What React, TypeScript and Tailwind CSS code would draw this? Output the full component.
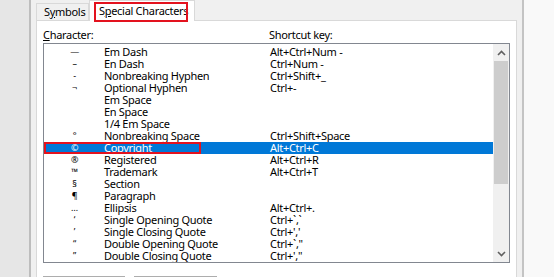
import { ReactNode } from 'react';

type Row = { sym: string; name: string; key: string };

const rows: Row[] = [
  { sym: '—', name: 'Em Dash', key: 'Alt+Ctrl+Num -' },
  { sym: '–', name: 'En Dash', key: 'Ctrl+Num -' },
  { sym: '-', name: 'Nonbreaking Hyphen', key: 'Ctrl+Shift+_' },
  { sym: '¬', name: 'Optional Hyphen', key: 'Ctrl+-' },
  { sym: '', name: 'Em Space', key: '' },
  { sym: '', name: 'En Space', key: '' },
  { sym: '', name: '1/4 Em Space', key: '' },
  { sym: '°', name: 'Nonbreaking Space', key: 'Ctrl+Shift+Space' },
  { sym: '©', name: 'Copyright', key: 'Alt+Ctrl+C' },
  { sym: '®', name: 'Registered', key: 'Alt+Ctrl+R' },
  { sym: '™', name: 'Trademark', key: 'Alt+Ctrl+T' },
  { sym: '§', name: 'Section', key: '' },
  { sym: '¶', name: 'Paragraph', key: '' },
  { sym: '…', name: 'Ellipsis', key: 'Alt+Ctrl+.' },
  { sym: '‘', name: 'Single Opening Quote', key: 'Ctrl+`,`' },
  { sym: '’', name: 'Single Closing Quote', key: "Ctrl+','" },
  { sym: '“', name: 'Double Opening Quote', key: 'Ctrl+`,"' },
  { sym: '”', name: 'Double Closing Quote', key: 'Ctrl+\',"' },
];

const SELECTED = 8;

function Chevron({ up }: { up?: boolean }) {
  return (
    <svg width="9" height="6" viewBox="0 0 9 6" className="text-[#606060]">
      <path
        d={up ? 'M1 5 L4.5 1.5 L8 5' : 'M1 1 L4.5 4.5 L8 1'}
        fill="none"
        stroke="currentColor"
        strokeWidth="1.6"
      />
    </svg>
  );
}

function ListRow({ row, selected }: { row: Row; selected: boolean }): ReactNode {
  return (
    <div
      className={`relative flex h-[12px] items-center leading-[12px] ${
        selected ? 'bg-[#0078d7] text-white' : 'text-black'
      }`}
    >
      <span className="w-[59px] text-center text-[9px]">{row.sym}</span>
      <span className="w-[166px] whitespace-nowrap">{row.name}</span>
      <span className="whitespace-nowrap">{row.key}</span>
      {selected && (
        <div className="absolute left-[-1px] top-[0px] h-[12px] w-[157px] border-2 border-[#e3121e]" />
      )}
    </div>
  );
}

export default function App() {
  return (
    <div
      className="flex h-[277px] w-[554px] overflow-hidden text-[11px] tracking-[-0.3px] text-black"
      style={{ fontFamily: '"Noto Sans", "Open Sans", sans-serif' }}
    >
      <div className="w-[29px] shrink-0 bg-[#e6e6e6]" />
      <div className="w-[2px] shrink-0 bg-[#bdbdbd]" />
      <div className="flex w-[493px] shrink-0 flex-col border-r-2 border-[#c4c4c4] bg-[#f0f0f0] pl-[5px]">
        {/* tabs */}
        <div className="flex h-[20px] items-end">
          <div className="flex h-[17px] w-[53px] items-center border border-b-0 border-[#d9d9d9] pl-[7px] leading-[14px]">
            S<span className="underline">y</span>mbols
          </div>
          <div className="relative z-10 -mb-px flex h-[21px] w-[106px] items-center border border-b-0 border-[#d9d9d9] bg-white pl-[9px] leading-[14px]">
            S<span className="underline">p</span>ecial Characters
            <div className="absolute bottom-[-1px] left-[4px] right-[6px] top-[1px] border-2 border-[#e3121e]" />
          </div>
        </div>
        {/* pane */}
        <div className="flex w-[481px] flex-1 flex-col border border-[#d9d9d9] bg-white px-[6px] pt-[7px]">
          <div className="flex h-[14px] leading-[14px]">
            <span className="w-[226px]">
              <span className="underline">C</span>haracter:
            </span>
            <span>Shortcut key:</span>
          </div>
          <div className="mt-[1px] flex h-[220px] w-[467px] border border-[#828790]">
            <div className="flex-1 overflow-hidden pt-[2px] pl-[1px]">
              {rows.map((r, i) => (
                <ListRow key={r.name} row={r} selected={i === SELECTED} />
              ))}
            </div>
            <div className="flex w-[16px] flex-col bg-[#f0f0f0]">
              <div className="flex h-[17px] items-center justify-center">
                <Chevron up />
              </div>
              <div className="mx-[1px] h-[123px] bg-[#cdcdcd]" />
              <div className="flex-1" />
              <div className="flex h-[17px] items-center justify-center">
                <Chevron />
              </div>
            </div>
          </div>
          <div className="mt-[13px] flex gap-[9px]">
            <div className="h-[23px] w-[82px] border border-[#adadad] bg-[#e1e1e1]" />
            <div className="h-[23px] w-[83px] border border-[#adadad] bg-[#e1e1e1]" />
          </div>
        </div>
      </div>
      <div className="flex-1 bg-[#f9f9f9]" />
    </div>
  );
}
